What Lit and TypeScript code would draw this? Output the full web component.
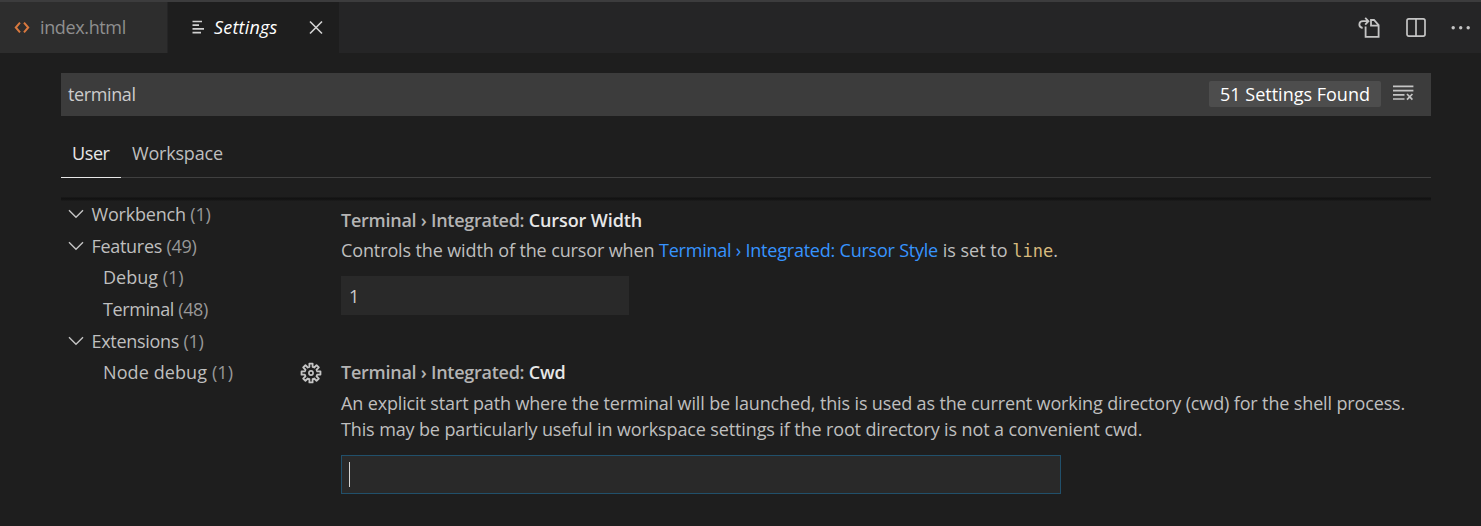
import { LitElement, html, css, svg } from "lit";
import { customElement } from "lit/decorators.js";

const chevron = html`<svg class="chev" width="16" height="16" viewBox="0 0 16 16"><path d="M1 4.2 8 11.2 15 4.2" fill="none" stroke="#c5c5c5" stroke-width="1.4"/></svg>`;

// Outline of the eight-toothed gear, centred in a 22px box.
const tooth = (() => {
  const pts: string[] = [];
  for (let i = 0; i < 8; i++) {
    const c = (i * Math.PI) / 4 - Math.PI / 2;
    for (const [da, r] of [[-0.25, 6.4], [-0.17, 9.6], [0.17, 9.6], [0.25, 6.4]]) {
      pts.push(`${(11 + r * Math.cos(c + da)).toFixed(2)},${(11 + r * Math.sin(c + da)).toFixed(2)}`);
    }
  }
  return pts.join(" ");
})();

const tree = [
  { label: "Workbench", count: 1, open: true, cls: "workbench" },
  { label: "Features", count: 49, open: true, cls: "features" },
  { label: "Debug", count: 1, open: false, cls: "debug" },
  { label: "Terminal", count: 48, open: false, cls: "terminal" },
  { label: "Extensions", count: 1, open: true, cls: "extensions" },
  { label: "Node debug", count: 1, open: false, cls: "node" },
];

@customElement("app-root")
export class AppRoot extends LitElement {
  static styles = css`
    :host { display: block; height: 526px; overflow: hidden; background: #1e1e1e; color: #bfbfbf;
      font-family: "Open Sans", "Noto Sans", sans-serif; font-size: 18px; line-height: 26px; white-space: nowrap; }
    * { box-sizing: border-box; }
    svg { display: block; flex: none; }
    .tabs { display: flex; height: 53px; background: #252526; border-top: 2px solid #3c3c3d; }
    .tab { display: flex; align-items: center; height: 51px; }
    .tab.file { width: 168px; padding-left: 14px; background: #2d2d2d; border-right: 1px solid #252526; color: #8f8f8f; }
    .tab.file .txt { margin-left: 10px; padding-bottom: 2px; letter-spacing: -0.37px; }
    .tab.active { width: 171px; padding-left: 23px; background: #1e1e1e; color: #fff; font-style: italic; }
    .tab.active .txt { margin-left: 9px; width: 64px; padding-bottom: 2px; letter-spacing: 0.2px; }
    .tab.active .close { margin-left: 30px; }
    .actions { display: flex; align-items: center; margin-left: auto; padding-right: 10px; gap: 25px; }
    .body { padding: 20px 50px 0 61px; }
    .search { display: flex; align-items: center; height: 43px; padding: 0 0 2px 7px; background: #3c3c3c; color: #cccccc; }
    .query { letter-spacing: -0.38px; }
    .badge { display: flex; align-items: center; justify-content: center; width: 172px; height: 26px; margin-left: auto; background: #4d4d4d; color: #fff; border-radius: 2px; }
    .clear { margin: 0 17px 2px 11px; }
    .scopes { display: flex; height: 62px; border-bottom: 1px solid #404040; }
    .scope { display: flex; align-items: center; height: 62px; padding: 12px 0 0 11px; letter-spacing: -0.2px; }
    .scope.on { width: 60px; padding-top: 13px; color: #e7e7e7; border-bottom: 1px solid #e7e7e7; letter-spacing: -0.4px; }
    .shadow { height: 4px; margin-top: 19px; background: linear-gradient(#1a1a1a, #111 45%, #1c1c1c); }
    .split { display: flex; margin-top: -3px; }
    .tree { width: 239px; padding: 0 0 0 7px; }
    .row { display: flex; align-items: center; height: 31.7px; }
    .row .name { margin-left: 7.5px; }
    .row.leaf .name { margin-left: 35px; }
    .row .workbench { letter-spacing: -0.2px; }
    .row .features { letter-spacing: -0.3px; }
    .row .terminal { letter-spacing: -0.4px; }
    .row .extensions { letter-spacing: -0.3px; }
    .row .node { letter-spacing: 0.1px; }
    .dim { color: #989898; }
    .list { flex: 1; }
    .setting { display: flex; }
    .gutter { width: 41px; flex: none; }
    .gear { margin-top: 3px; }
    .title { font-weight: 600; color: #b4b4b4; letter-spacing: -0.26px; }
    .title b { font-weight: 600; color: #e7e7e7; letter-spacing: -0.1px; }
    .first { padding-top: 9px; height: 161px; }
    .desc { margin-top: 4px; letter-spacing: -0.12px; }
    .second .desc { margin-top: 5px; line-height: 26.4px; letter-spacing: -0.125px; }
    .second .desc .lead { letter-spacing: -0.138px; }
    .link { color: #3794ff; letter-spacing: -0.22px; }
    .tail { letter-spacing: 0; }
    .code { font-family: "DejaVu Sans Mono", monospace; font-size: 17px; color: #d7ba7d; letter-spacing: 0; }
    .num { display: flex; align-items: center; width: 288px; height: 39px; margin-top: 12px; padding-left: 8px; background: #292929; color: #ccc; }
    .text { display: flex; align-items: center; width: 720px; height: 39px; margin-top: 12px; padding-left: 7px; background: #292929; border: 1px solid #21506b; }
    .caret { width: 1px; height: 25px; background: #d4d4d4; }
  `;

  render() {
    return html`
      <div class="tabs">
        <div class="tab file">
          <svg width="16" height="16" viewBox="0 0 16 16" fill="none" stroke="#d9793f" stroke-width="2"><path d="M6 2.7 1.8 7.5 6 12.3M10 2.7 14.2 7.5 10 12.3"/></svg>
          <span class="txt">index.html</span>
        </div>
        <div class="tab active">
          <svg width="14" height="16" viewBox="0 0 14 16" stroke="#d0d0d0" stroke-width="1.7"><path d="M1.5 1.5H11M1.5 5.2H8M1.5 8.9H13M1.5 12.6H10"/></svg>
          <span class="txt">Settings</span>
          <svg class="close" width="16" height="16" viewBox="0 0 16 16" stroke="#d4d4d4" stroke-width="1.6"><path d="M2 1.5 14 13.5M14 1.5 2 13.5"/></svg>
        </div>
        <div class="actions">
          <svg width="24" height="24" viewBox="0 0 24 24" fill="none" stroke="#c5c5c5" stroke-width="1.8"><path d="M8.6 10.5V20.8H21.6V9.2L17 4H14V9.6H21.4M5.6 12C1 11 1.4 5.2 6 5.2H11M8.2 1.8 11.4 5.2 8.2 8.6"/></svg>
          <svg width="20" height="20" viewBox="0 0 20 20" fill="none" stroke="#c5c5c5" stroke-width="1.7"><rect x="1" y="0.9" width="18" height="17.2" rx="1.8"/><path d="M10 1V18"/></svg>
          <svg width="20" height="20" viewBox="0 0 20 20" fill="#c5c5c5"><circle cx="2.2" cy="9.7" r="1.7"/><circle cx="9.7" cy="9.7" r="1.7"/><circle cx="17.2" cy="9.7" r="1.7"/></svg>
        </div>
      </div>
      <div class="body">
        <div class="search">
          <span class="query">terminal</span>
          <div class="badge"><span>51 Settings Found</span></div>
          <svg class="clear" width="22" height="18" viewBox="0 0 22 18" stroke="#c5c5c5" stroke-width="1.7"><path d="M1 2.4H21.4M1 6.6H21.4M1 10.8H12.5M1 15H12.5M15 10 20.4 15.6M20.4 10 15 15.6"/></svg>
        </div>
        <div class="scopes">
          <div class="scope on">User</div>
          <div class="scope">Workspace</div>
        </div>
        <div class="shadow"></div>
        <div class="split">
          <div class="tree">
            ${tree.map((t) => html`<div class="row ${t.open ? "" : "leaf"}">${t.open ? chevron : ""}<span class="name ${t.cls}">${t.label} <span class="dim">(${t.count})</span></span></div>`)}
          </div>
          <div class="list">
            <div class="setting first">
              <div class="gutter"></div>
              <div>
                <div class="title">Terminal › Integrated: <b>Cursor Width</b></div>
                <div class="desc">Controls the width of the cursor when <span class="link">Terminal › Integrated: Cursor Style</span><span class="tail"> is set to </span><span class="code">line</span>.</div>
                <div class="num">1</div>
              </div>
            </div>
            <div class="setting second">
              <div class="gutter"><svg class="gear" width="22" height="22" viewBox="0 0 22 22" fill="none" stroke="#c5c5c5" stroke-width="1.8" stroke-linejoin="round">${svg`<polygon points=${tooth}/>`}<circle cx="11" cy="11" r="2.1" stroke-width="1.6"/></svg></div>
              <div>
                <div class="title">Terminal › Integrated: <b>Cwd</b></div>
                <div class="desc"><span class="lead">An explicit start path where the terminal will be launched, this is used as the current working directory (cwd) for the shell process.</span><br>This may be particularly useful in workspace settings if the root directory is not a convenient cwd.</div>
                <div class="text"><div class="caret"></div></div>
              </div>
            </div>
          </div>
        </div>
      </div>`;
  }
}
